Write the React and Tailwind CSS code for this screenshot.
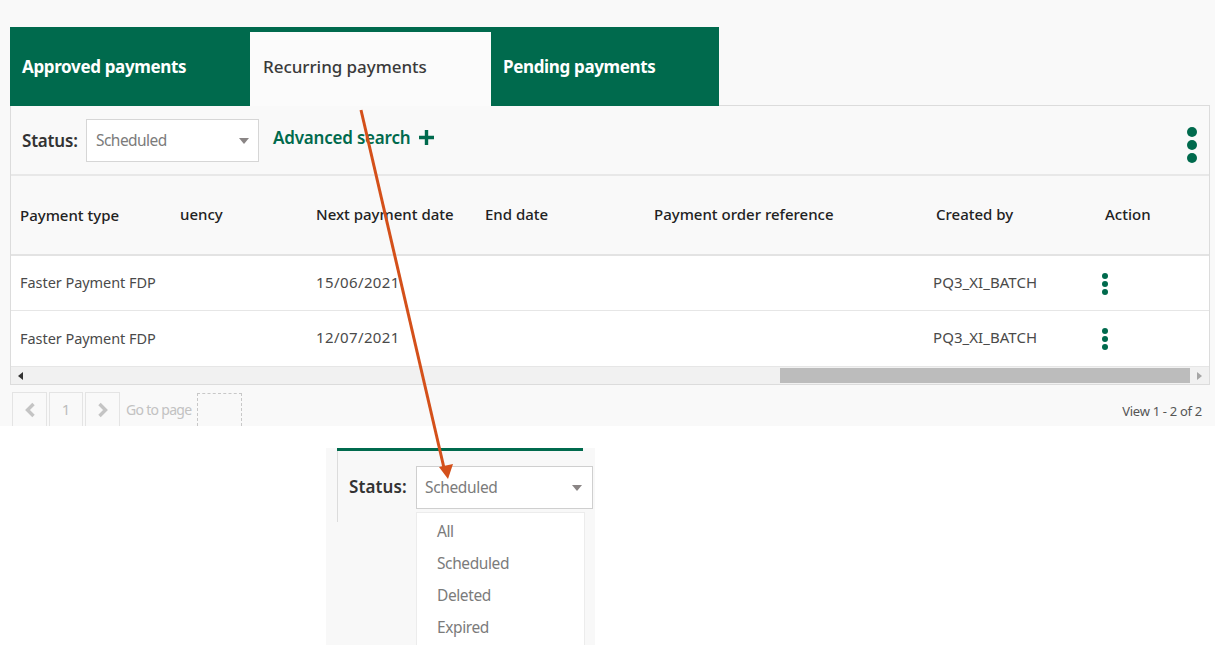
import React from "react";

const columns = "grid grid-cols-[169px_136px_169px_169px_282px_169px_1fr]";

const Dots = ({ big }) => (
  <div className={big ? "flex flex-col gap-[3px]" : "flex flex-col gap-[2px]"}>
    {[0, 1, 2].map((i) => (
      <span key={i} className={big ? "w-[10px] h-[10px] rounded-full bg-[#006a4d]" : "w-[6px] h-[6px] rounded-full bg-[#006a4d]"} />
    ))}
  </div>
);

const Caret = () => (
  <span className="w-0 h-0 border-x-[5px] border-x-transparent border-t-[6px] border-t-[#8a8585]" />
);

const Row = ({ date, border }) => (
  <div className={`${columns} h-[55px] items-center bg-white text-[15px] text-[#4a4a4a] ${border ? "border-b border-[#e6e6e6]" : ""}`}>
    {/* frozen column sits a pixel lower than the scrolling cells */}
    <div className={`self-stretch flex items-center pl-[9px] ${border ? "pb-[2px]" : "pb-px"} bg-white border-b border-[#e6e6e6] translate-y-px text-[14.5px] tracking-[-0.05px]`}>Faster Payment FDP</div>
    <div />
    <div className="tracking-[0.4px] -mt-[2px]">{date}</div>
    <div />
    <div />
    <div className="-ml-[3px] -mt-[2px] tracking-[0.05px]">PQ3_XI_BATCH</div>
    <div className="-ml-[3px] mt-px"><Dots /></div>
  </div>
);

const PageBox = ({ children, className = "" }) => (
  <div className={`h-[34px] border border-[#e4e4e4] border-b-0 flex items-center justify-center text-[#bdbdbd] text-[15px] ${className}`}>
    {children}
  </div>
);

export default function App() {
  return (
    <div className="relative w-[1222px] h-[670px] bg-white overflow-hidden font-['Noto_Sans',sans-serif]">
      {/* Top screenshot */}
      <div className="w-[1215px] h-[426px] bg-[#f9f9f9] pt-[27px] pl-[10px] pr-[5px]">
        <div className="flex h-[79px] text-[17px] font-bold text-white tracking-[-0.35px]">
          <div className="w-[240px] bg-[#006a4d] pl-3 pt-[25px] leading-[30px]">Approved payments</div>
          <div className="w-[241px] bg-[#fbfbfb] border-t-[5px] border-[#006a4d] pl-[13px] pt-5 leading-[30px] font-medium text-[#3a3a3a] tracking-[-0.05px]">Recurring payments</div>
          <div className="w-[228px] bg-[#006a4d] pl-3 pt-[25px] leading-[30px]">Pending payments</div>
        </div>

        <div className="h-[280px] -mt-px border border-[#dcdcdc] flex flex-col">
          {/* toolbar */}
          <div className="h-[70px] border-b-2 border-[#e8e8e8] flex items-start pl-[11px] pr-[12px] shrink-0">
            <span className="w-[64px] mt-[21px] text-[17px] font-semibold text-[#333] leading-[28px] tracking-[-0.2px]">Status:</span>
            <div className="mt-[13px] w-[173px] h-[43px] bg-white border border-[#d6d6d6] flex items-center justify-between pl-[9px] pr-[9px] text-[15.5px] tracking-[-0.55px] text-[#7b7b7b]">
              Scheduled
              <Caret />
            </div>
            <span className="ml-[14px] mt-[18px] text-[17px] font-semibold text-[#006a4d] leading-[28px] tracking-[-0.2px]">Advanced search</span>
            <svg className="ml-[9px] mt-[24px]" width="15" height="15" viewBox="0 0 15 15">
              <path d="M7.5 0v15M0 7.5h15" stroke="#006a4d" strokeWidth="3.4" />
            </svg>
            <div className="ml-auto mt-[21px]"><Dots big /></div>
          </div>

          {/* table */}
          <div className={`${columns} h-[80px] items-center border-b-2 border-[#e3e3e3] text-[15px] font-medium text-[#222] shrink-0`}>
            <div className="pl-[9px]">Payment type</div>
            <div className="-mt-[2px]">uency</div>
            <div className="-mt-[2px]">Next payment date</div>
            <div className="-mt-[2px]">End date</div>
            <div className="-mt-[2px]">Payment order reference</div>
            <div className="-mt-[2px]">Created by</div>
            <div className="-mt-[2px]">Action</div>
          </div>
          <Row date="15/06/2021" border />
          <Row date="12/07/2021" />

          {/* scrollbar */}
          <div className="flex-1 bg-[#f1f1f1] border-t border-[#e6e6e6] flex items-center relative">
            <span className="ml-[7px] w-0 h-0 border-y-[4px] border-y-transparent border-r-[5px] border-r-[#333]" />
            <div className="ml-[757px] w-[410px] h-[15px] bg-[#bcbcbc]" />
            <span className="ml-[7px] w-0 h-0 border-y-[4px] border-y-transparent border-l-[5px] border-l-[#a6a6a6]" />
          </div>
        </div>

        {/* pager */}
        <div className="flex items-end h-[41px] pl-[2px] pr-[8px]">
          <div className="flex items-end gap-[2px]">
            <PageBox className="w-[35px]">
              <svg width="12" height="16" viewBox="0 0 12 16"><path d="M9.5 2 3.5 8l6 6" fill="none" stroke="#c4c4c4" strokeWidth="3.4" /></svg>
            </PageBox>
            <PageBox className="w-[34px]">1</PageBox>
            <PageBox className="w-[35px]">
              <svg width="12" height="16" viewBox="0 0 12 16"><path d="M2.5 2l6 6-6 6" fill="none" stroke="#c4c4c4" strokeWidth="3.4" /></svg>
            </PageBox>
          </div>
          <span className="w-[65px] ml-[6px] mb-[6px] text-[14px] leading-[20px] text-[#c2c2c2] tracking-[-0.7px] whitespace-nowrap">Go to page</span>
          <div className="ml-[6px] w-[45px] h-[33px] border border-dashed border-[#c8c8c8] border-b-0" />
          <span className="ml-auto mb-[5px] text-[13px] leading-[20px] text-[#555] tracking-[-0.3px]">View 1 - 2 of 2</span>
        </div>
      </div>

      {/* Status filter snippet */}
      <div className="ml-[326px] mt-[22px] w-[269px] h-[197px] bg-[#f8f8f8] overflow-hidden pl-[11px]">
        <div className="w-[246px] h-[3px] bg-[#006a4d]" />
        <div className="flex items-start">
          <div className="w-[79px] h-[71px] border-l border-[#dcdcdc] pl-[11px] pt-[22px] text-[17px] leading-[28px] font-semibold text-[#333] tracking-[0.1px]">Status:</div>
          <div className="flex flex-col mt-[15px]">
            <div className="w-[177px] h-[43px] bg-white border border-[#cfcfcf] flex items-center justify-between pl-[8px] pr-[10px] pt-px text-[15.5px] tracking-[-0.35px] text-[#7b7b7b]">
              Scheduled
              <Caret />
            </div>
            <div className="mt-[3px] w-[169px] h-[140px] bg-white border border-[#ececec] pl-[20px] pt-[2px] text-[15.5px] tracking-[-0.4px] leading-[32px] text-[#7b7b7b]">
              <div>All</div>
              <div>Scheduled</div>
              <div>Deleted</div>
              <div>Expired</div>
            </div>
          </div>
        </div>
      </div>

      {/* Annotation arrow */}
      <svg className="absolute left-0 top-0 pointer-events-none" width="1222" height="670">
        <path d="M361 110 444 468" stroke="#d4501a" strokeWidth="3" />
        <path d="M439 467 453 464 448 479Z" fill="#d4501a" />
      </svg>
    </div>
  );
}
